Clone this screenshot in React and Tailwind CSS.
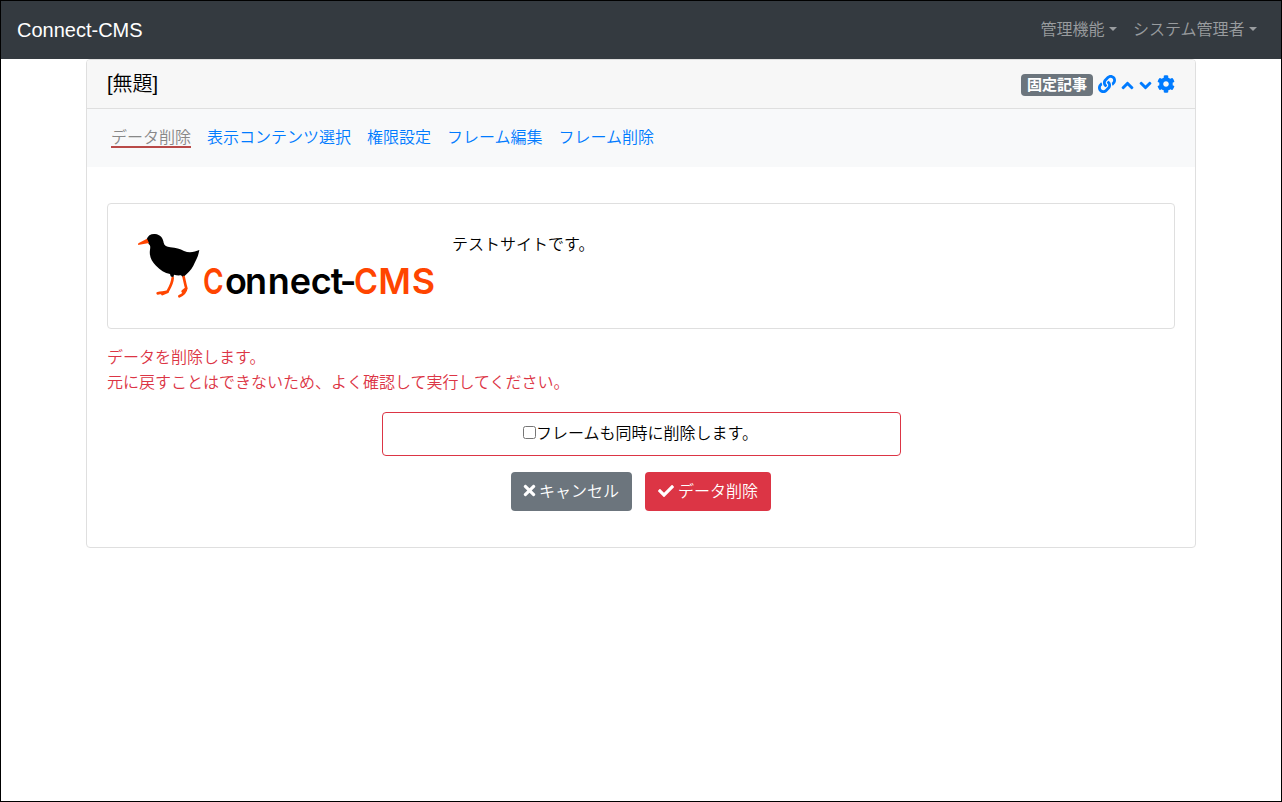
import { FaLink, FaAngleUp, FaAngleDown, FaCog, FaTimes, FaCheck } from "react-icons/fa";

const tabs = ["表示コンテンツ選択", "権限設定", "フレーム編集", "フレーム削除"];

function NavDropdown({ label }) {
  return (
    <a className="flex items-center px-2 text-white/50">
      {label}
      <span className="ml-[4.5px] -mt-0.5 border-x-[4.8px] border-t-[4.8px] border-x-transparent border-t-white/50" />
    </a>
  );
}

function Logo() {
  return (
    <svg className="h-[80px] w-[315px] shrink-0" viewBox="0 0 945 240" role="img">
      <path
        fill="#000"
        d="M50 43C54 31 63 26 75 27C91 28 99 40 101 53C103 62 110 65 121 67C138 68 150 72 162 78C178 85 194 81 208 75C206 84 205 92 200 101C192 116 188 130 177 140C171 146 164 151 160 158L153 151C144 152 138 151 132 149L130 158L122 154L120 147C104 144 91 135 78 122C64 109 57 92 60 74C61 67 62 61 56 57Z"
      />
      <path fill="#ff4500" d="M51 41L57 54L45 56L24 60L25 55Z" />
      <path
        fill="none"
        stroke="#ff4500"
        strokeLinecap="round"
        strokeLinejoin="round"
        strokeWidth="8"
        d="M128 159C127 175 120 186 113 199M113 199C106 203 97 202 83 205M113 200L97 207M161 156C164 169 166 180 169 190M169 190C167 202 157 210 148 214M169 190L158 199"
      />
      <g fontFamily="Inter, sans-serif" fontWeight="600" fontSize="108">
        <text x="219" y="207" fill="#ff4500" textLength="62" lengthAdjust="spacingAndGlyphs">C</text>
        <text x="285 345 413 479 542 602 629" y="207" fill="#000">onnect-</text>
        <text x="672" y="207" fill="#ff4500" textLength="72" lengthAdjust="spacingAndGlyphs">C</text>
        <text x="745" y="207" fill="#ff4500" textLength="98" lengthAdjust="spacingAndGlyphs">M</text>
        <text x="845" y="207" fill="#ff4500" textLength="70" lengthAdjust="spacingAndGlyphs">S</text>
      </g>
    </svg>
  );
}

export default function App() {
  return (
    <div className="h-[802px] w-[1282px] border border-black bg-white font-['Liberation_Sans','Noto_Sans_CJK_JP',sans-serif] text-base leading-[25.6px] font-[350] text-black">
      <nav className="flex h-[58px] items-center justify-between bg-[#343a40] px-4">
        <a className="text-xl text-white">Connect-CMS</a>
        <div className="flex">
          <NavDropdown label="管理機能" />
          <NavDropdown label="システム管理者" />
        </div>
      </nav>

      <main className="ml-[85px] h-[489px] w-[1110px] rounded border border-[#dfdfdf]">
        <header className="flex h-[49px] items-center justify-between rounded-t-[3px] border-b border-[#dfdfdf] bg-[#f7f7f7] pr-[19px] pl-5">
          <h1 className="text-xl">[無題]</h1>
          <div className="flex items-center pt-0.5 text-[#007bff]">
            <span className="mr-[5px] flex h-[22px] w-[72px] items-center justify-center rounded bg-[#6c757d] text-[15px] font-bold text-white">
              固定記事
            </span>
            <FaLink className="mr-[2px] mb-0.5 size-[18px]" />
            <FaAngleUp className="size-[19px]" />
            <FaAngleDown className="mr-[2px] -ml-px size-[19px]" />
            <FaCog className="mb-0.5 mr-px size-[18px]" />
          </div>
        </header>

        <div className="flex h-[58px] items-center gap-4 bg-[#f8f9fa] pl-6">
          <span className="mb-0.5 flex h-[21px] items-center border-b-2 border-[#b94a48] pt-1 text-[#888]">データ削除</span>
          {tabs.map((t) => (
            <a key={t} className="text-[#007bff]">{t}</a>
          ))}
        </div>

        <div className="px-5 pt-9">
          <section className="flex h-[126px] items-start rounded border border-[#dfdfdf] pt-[21px] pl-[22px]">
            <Logo />
            <p className="mt-[7px] ml-[7px]">テストサイトです。</p>
          </section>

          <p className="mt-[15.5px] text-[#dc3545]">
            データを削除します。
            <br />
            元に戻すことはできないため、よく確認して実行してください。
          </p>

          <label className="mx-auto mt-[16.5px] flex h-[44px] w-[519px] items-center justify-center rounded border border-[#dc3545] pr-px">
            <input type="checkbox" className="m-0 mb-[3px] size-[13px]" />
            フレームも同時に削除します。
          </label>

          <div className="mt-4 flex justify-center gap-[13px]">
            <button className="flex h-[39px] w-[121px] items-center justify-center gap-[3px] rounded bg-[#6c757d] pr-px text-white">
              <FaTimes className="mb-0.5 h-[17px] w-[13px]" />
              キャンセル
            </button>
            <button className="flex h-[39px] w-[126px] items-center justify-center gap-[4px] rounded bg-[#dc3545] text-white">
              <FaCheck className="mb-0.5 size-4" />
              データ削除
            </button>
          </div>
        </div>
      </main>
    </div>
  );
}
